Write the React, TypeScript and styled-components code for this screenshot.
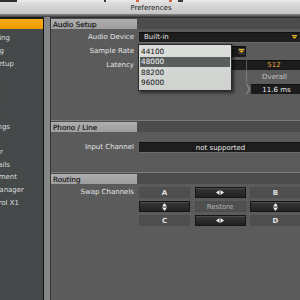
import React from 'react'
import styled, { createGlobalStyle } from 'styled-components'

const GlobalStyle = createGlobalStyle`
  html, body {
    margin: 0;
    padding: 0;
    width: 300px;
    height: 300px;
    overflow: hidden;
    background: #5a5b5a;
  }
  body {
    font-family: "DejaVu Sans", "Liberation Sans", sans-serif;
    font-size: 7px;
  }
`

const Window = styled.div`
  width: 302px;
  height: 300px;
  display: flex;
  flex-direction: column;
`

const TopStrip = styled.div`
  height: 2px;
  background: linear-gradient(
    to right,
    #2e2e2e 0 17px,
    #e6e6e6 17px 104px,
    #3a3a3a 104px 106px,
    #e6e6e6 106px 136px,
    #d2643c 136px 139px,
    #e6e6e6 139px 169px,
    #d2643c 169px 172px,
    #e6e6e6 172px 178px,
    #3a3a3a 178px 183px,
    #e6e6e6 183px
  );
`

const TitleBar = styled.div`
  height: 12px;
  display: flex;
  align-items: center;
  justify-content: center;
  background: linear-gradient(#dedede, #c4c4c4);
  color: #222;
  font-size: 7px;
`

const TitleShade = styled.div`
  height: 3px;
  background: linear-gradient(#8c8c8c, #3c3c3c);
`

const Body = styled.div`
  flex: 1;
  display: flex;
  min-height: 0;
`

const Sidebar = styled.div`
  width: 43px;
  flex-shrink: 0;
  background: #45494a;
  border-top: 2px solid #1c1c1c;
  border-right: 1px solid #121212;
  overflow: hidden;
  display: flex;
  flex-direction: column;
`

const SideItem = styled.div<{ $end: number; $active?: boolean }>`
  height: 12.64px;
  flex-shrink: 0;
  display: flex;
  align-items: center;
  justify-content: flex-end;
  padding-right: ${p => 43 - p.$end}px;
  width: 43px;
  box-sizing: border-box;
  white-space: nowrap;
  color: #dadede;
  font-size: 7px;
  padding-top: 1px;
  background: ${p =>
    p.$active ? 'linear-gradient(#f7ad1c 0, #ef9a00 10px, transparent 10px)' : 'none'};
`

const Splitter = styled.div`
  width: 6px;
  flex-shrink: 0;
  background: #868888;
  border-right: 1px solid #343434;
`

const Main = styled.div`
  width: 251px;
  flex-shrink: 0;
  background: #5a5b5a;
  display: flex;
  flex-direction: column;
`

const SectionHeader = styled.div<{ $gap: number; $line: string }>`
  margin-top: ${p => p.$gap}px;
  border-top: 1px solid ${p => p.$line};
  padding-top: 1px;
  height: 10px;
  display: flex;
  background: #4b4c4b;
`

const SectionTitle = styled.div`
  width: 86px;
  height: 10px;
  box-sizing: border-box;
  padding-left: 2px;
  display: flex;
  align-items: center;
  background: linear-gradient(#aeaeae, #9e9e9e);
  color: #121212;
  font-size: 7.2px;
  -webkit-text-stroke: 0.15px #121212;
`

const Row = styled.div<{ $h: number; $gap?: number }>`
  height: ${p => p.$h}px;
  margin-top: ${p => p.$gap ?? 0}px;
  display: flex;
  align-items: center;
  flex-shrink: 0;
`

const TopRow = styled.div<{ $gap: number }>`
  margin-top: ${p => p.$gap}px;
  display: flex;
  align-items: flex-start;
`

const Label = styled.div<{ $h?: number }>`
  width: 83px;
  flex-shrink: 0;
  text-align: right;
  color: #e6e6e6;
  font-size: 7px;
  line-height: ${p => p.$h ?? 10}px;
  white-space: nowrap;
`

const Field = styled.div<{ $w: number; $center?: boolean; $color?: string }>`
  width: ${p => p.$w}px;
  height: 10px;
  box-sizing: border-box;
  flex-shrink: 0;
  display: flex;
  align-items: center;
  justify-content: ${p => (p.$center ? 'center' : 'space-between')};
  padding: 0 4px 0 5px;
  background: #1e1e1e;
  border-top: 1px solid #101010;
  box-shadow: 0 1px 0 #6a6b6a;
  color: ${p => p.$color ?? '#e8e8e8'};
  font-size: 7px;
  white-space: nowrap;
`

const Controls = styled.div`
  margin-left: 5px;
  display: flex;
  align-items: center;
`

const SelectWrap = styled.div`
  position: relative;
  width: 107px;
  height: 11px;
  display: flex;
  background: #1e1e1e;
  border-top: 1px solid #101010;
  box-sizing: border-box;
`

const ArrowButton = styled.div`
  margin-left: auto;
  width: 9px;
  height: 9px;
  box-sizing: border-box;
  background: linear-gradient(#3e3e3e, #2c2c2c);
  border: 1px solid #141414;
  display: flex;
  align-items: center;
  justify-content: center;
`

const Popup = styled.div`
  position: absolute;
  left: -1px;
  top: -3px;
  width: 94px;
  height: 47px;
  box-sizing: border-box;
  padding: 2px 1px 0;
  background: linear-gradient(#dcdedc, #cfd1cf);
  border: 1px solid #2a2a2a;
  box-shadow: 2px 2px 3px rgba(0, 0, 0, 0.55);
  z-index: 2;
`

const Option = styled.div<{ $hi?: boolean }>`
  height: 10.3px;
  display: flex;
  align-items: center;
  padding-left: 1px;
  background: ${p => (p.$hi ? '#585d5d' : 'transparent')};
  color: ${p => (p.$hi ? '#f2f2f2' : '#121212')};
  font-size: 7.3px;
`

const Slider = styled.div`
  width: 107px;
  height: 10px;
  background: #1e1e1e;
  border-top: 1px solid #101010;
  box-sizing: border-box;
`

const ValueBox = styled.div<{ $w: number; $color: string }>`
  width: ${p => p.$w}px;
  height: 10px;
  box-sizing: border-box;
  margin-left: 1px;
  display: flex;
  align-items: center;
  justify-content: center;
  background: #1c1c1c;
  border-top: 1px solid #101010;
  color: ${p => p.$color};
  font-size: 7px;
  white-space: nowrap;
`

const OverallCell = styled.div`
  margin-left: 107px;
  width: 55px;
  height: 12px;
  border-left: 1px solid #7c7d7c;
  display: flex;
  align-items: center;
  justify-content: center;
  color: #c6c6c6;
  font-size: 7px;
`

const DimArea = styled.div`
  width: 107px;
  height: 10px;
  display: flex;
  align-items: center;
  gap: 26px;
  padding-left: 14px;
  box-sizing: border-box;
  color: #454645;
  font-size: 7px;
`

const Chevron = styled.svg`
  display: block;
  flex-shrink: 0;
`

const ButtonGrid = styled.div`
  margin-left: 5px;
  display: grid;
  grid-template-columns: 51px 51px 51px;
  grid-auto-rows: 11px;
  column-gap: 4.5px;
  row-gap: 3px;
`

const SwapButton = styled.div<{ $dark?: boolean; $dim?: boolean }>`
  box-sizing: border-box;
  display: flex;
  align-items: center;
  justify-content: center;
  font-size: 7px;
  color: ${p => (p.$dim ? '#b4b4b4' : '#e0e0e0')};
  font-weight: ${p => (p.$dim ? 'normal' : 'bold')};
  background: ${p => (p.$dark ? 'linear-gradient(#363636, #222)' : '#4e4f4e')};
  border: 1px solid ${p => (p.$dark ? '#141414' : '#4c4d4c')};
  box-shadow: ${p => (p.$dark ? 'inset 0 1px 0 #4c4c4c' : 'none')};
`

const DropArrow = () => (
  <svg width="5" height="4" viewBox="0 0 5 4">
    <rect x="0" y="0" width="5" height="1" fill="#e6b422" />
    <polygon points="0,1.6 5,1.6 2.5,4" fill="#e6b422" />
  </svg>
)

const SwapH = () => (
  <svg width="8" height="5" viewBox="0 0 8 5">
    <polygon points="3.5,0 3.5,5 0,2.5" fill="#f0f0f0" />
    <polygon points="4.5,0 4.5,5 8,2.5" fill="#f0f0f0" />
  </svg>
)

const SwapV = () => (
  <svg width="5" height="8" viewBox="0 0 5 8">
    <polygon points="0,3.5 5,3.5 2.5,0" fill="#f0f0f0" />
    <polygon points="0,4.5 5,4.5 2.5,8" fill="#f0f0f0" />
  </svg>
)

const sideItems = [
  { name: 'Audio Setup', end: -4, active: true },
  { name: 'Output Routing', end: 10 },
  { name: 'Input Routing', end: 4 },
  { name: 'MIDI Setup', end: 14 },
  { name: 'Loading', end: -4 },
  { name: 'Transport', end: -4 },
  { name: 'Decks Layout', end: -4 },
  { name: 'Mixer', end: -4 },
  { name: 'Global Settings', end: 10 },
  { name: 'Effects', end: -4 },
  { name: 'Mix Recorder', end: 3 },
  { name: 'Browser Details', end: 10 },
  { name: 'File Management', end: 17 },
  { name: 'Controller Manager', end: 24 },
  { name: 'Traktor Kontrol X1', end: 19 },
]

const rates = ['44100', '48000', '88200', '96000']

export default function App() {
  return (
    <>
      <GlobalStyle />
      <Window>
        <TopStrip />
        <TitleBar>Preferences</TitleBar>
        <TitleShade />
        <Body>
          <Sidebar>
            {sideItems.map(item => (
              <SideItem key={item.name} $end={item.end} $active={item.active}>
                {item.name}
              </SideItem>
            ))}
          </Sidebar>
          <Splitter />
          <Main>
            <SectionHeader $gap={0} $line="#2e2e2e">
              <SectionTitle>Audio Setup</SectionTitle>
            </SectionHeader>

            <Row $h={15}>
              <Label>Audio Device</Label>
              <Controls>
                <Field $w={162}>
                  <span>Built-in</span>
                  <DropArrow />
                </Field>
              </Controls>
            </Row>

            <Row $h={14}>
              <Label>Sample Rate</Label>
              <Controls>
                <SelectWrap>
                  <ArrowButton>
                    <DropArrow />
                  </ArrowButton>
                  <Popup>
                    {rates.map(r => (
                      <Option key={r} $hi={r === '48000'}>
                        {r}
                      </Option>
                    ))}
                  </Popup>
                </SelectWrap>
              </Controls>
            </Row>

            <Row $h={13}>
              <Label>Latency</Label>
              <Controls>
                <Slider />
                <ValueBox $w={54} $color="#e2a62e">
                  512
                </ValueBox>
              </Controls>
            </Row>

            <Row $h={12}>
              <Label />
              <Controls>
                <OverallCell>Overall</OverallCell>
              </Controls>
            </Row>

            <Row $h={12}>
              <Label />
              <Controls>
                <DimArea>
                  <span>2.9 ms</span>
                  <span>5.8 ms</span>
                </DimArea>
                <Chevron width="4" height="10" viewBox="0 0 4 10">
                  <polygon points="0,0 1.5,0 4,5 1.5,10 0,10 2.5,5" fill="#858685" />
                </Chevron>
                <ValueBox $w={51} $color="#ececec">
                  11.6 ms
                </ValueBox>
              </Controls>
            </Row>

            <SectionHeader $gap={25} $line="#7a7b7a">
              <SectionTitle>Phono / Line</SectionTitle>
            </SectionHeader>

            <Row $h={20} $gap={5}>
              <Label>Input Channel</Label>
              <Controls>
                <Field $w={162} $center>
                  not supported
                </Field>
              </Controls>
            </Row>

            <SectionHeader $gap={15} $line="#7a7b7a">
              <SectionTitle>Routing</SectionTitle>
            </SectionHeader>

            <TopRow $gap={3}>
              <Label $h={11}>Swap Channels</Label>
              <ButtonGrid>
                <SwapButton>A</SwapButton>
                <SwapButton $dark>
                  <SwapH />
                </SwapButton>
                <SwapButton>B</SwapButton>
                <SwapButton $dark>
                  <SwapV />
                </SwapButton>
                <SwapButton $dim>Restore</SwapButton>
                <SwapButton $dark>
                  <SwapV />
                </SwapButton>
                <SwapButton>C</SwapButton>
                <SwapButton $dark>
                  <SwapH />
                </SwapButton>
                <SwapButton>D</SwapButton>
              </ButtonGrid>
            </TopRow>
          </Main>
        </Body>
      </Window>
    </>
  )
}
